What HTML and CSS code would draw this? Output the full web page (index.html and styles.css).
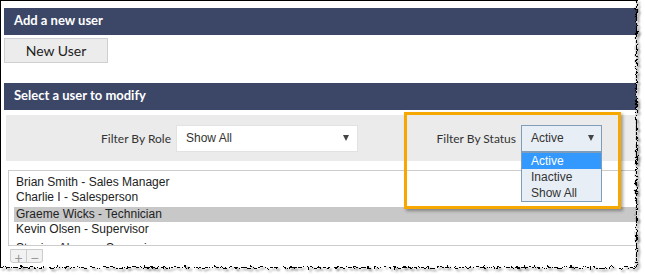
FILE: index.html
```html
<!DOCTYPE html>
<html lang="en">
<head>
  <meta charset="UTF-8" />
  <title>Users</title>
  <link rel="stylesheet" href="styles.css">
</head>
<body>
  <div class="frame">
    <div class="bar">Add a new user</div>
    <button class="btn">New User</button>

    <div class="bar bar-gap">Select a user to modify</div>
    <div class="filters">
      <div class="filter">
        <label>Filter By Role</label>
        <div class="select select-role"><span>Show All</span><i class="caret"></i></div>
      </div>
      <div class="filter">
        <label>Filter By Status</label>
        <div class="select select-status"><span>Active</span><i class="caret"></i>
          <ul class="options">
            <li class="on">Active</li>
            <li>Inactive</li>
            <li>Show All</li>
          </ul>
        </div>
      </div>
    </div>

    <div class="userlist">
      <div class="user">Brian Smith - Sales Manager</div>
      <div class="user">Charlie I - Salesperson</div>
      <div class="user sel">Graeme Wicks - Technician</div>
      <div class="user">Kevin Olsen - Supervisor</div>
      <div class="user last">Stanica Alvana - Supervisor</div>
    </div>
    <div class="listbtns"><span>+</span><span>&minus;</span></div>

    <!-- annotation round the status filter -->
    <div class="callout"></div>
  </div>

  <!-- torn paper edge -->
  <svg class="torn" width="645" height="275" viewBox="0 0 645 275">
    <defs>
      <filter id="rip" filterUnits="userSpaceOnUse" x="0" y="0" width="645" height="275" color-interpolation-filters="sRGB">
        <feTurbulence type="fractalNoise" baseFrequency="0.3" numOctaves="2" seed="7" result="noise"/>
        <feDisplacementMap in="SourceGraphic" in2="noise" scale="6" xChannelSelector="R" yChannelSelector="G"/>
      </filter>
      <filter id="rip-edge" filterUnits="userSpaceOnUse" x="0" y="0" width="645" height="275" color-interpolation-filters="sRGB">
        <feTurbulence type="fractalNoise" baseFrequency="0.3" numOctaves="2" seed="7" result="noise"/>
        <feDisplacementMap in="SourceGraphic" in2="noise" scale="6" xChannelSelector="R" yChannelSelector="G" result="moved"/>
        <feDropShadow in="moved" dx="2" dy="2" stdDeviation="1.2" flood-color="#000" flood-opacity="0.55"/>
      </filter>
    </defs>
    <path d="M636.5 -10 V267.5 H-10 V290 H660 V-10 Z" fill="#fff" filter="url(#rip)"/>
    <path d="M636.5 -10 V267.5 H-10" fill="none" stroke="#000" stroke-width="1.2" filter="url(#rip-edge)"/>
  </svg>
</body>
</html>
```

FILE: styles.css
```css
body {
  margin: 0;
  background: #fff;
  position: relative;
}

.frame {
  position: relative;
  box-sizing: border-box;
  width: 645px;
  height: 275px;
  padding: 7px 0 0 3px;
  border-top: 1px solid #000;
  border-left: 1px solid #000;
  overflow: hidden;
}

.bar {
  box-sizing: border-box;
  height: 27px;
  padding: 4px 0 0 10px;
  line-height: 23px;
  background: #3c4767;
  color: #fff;
  font: 700 13px 'Lato', sans-serif;
}
.bar-gap {
  margin-top: 20px;
}

.btn {
  display: block;
  margin-top: 3px;
  width: 104px;
  height: 25px;
  padding: 0;
  background: #ececec;
  border: 1px solid #cfcfcf;
  color: #222;
  font: 14px 'Lato', sans-serif;
}

.filters {
  margin: 5px 0 0 2px;
  height: 46px;
  background: #ebebeb;
  display: grid;
  grid-template-columns: 352px 244px;
  align-items: center;
}
.filter {
  display: flex;
  justify-content: flex-end;
  align-items: center;
  gap: 5px;
}
.filter label {
  font: 12px 'Lato', sans-serif;
  color: #333;
}

.select {
  position: relative;
  box-sizing: border-box;
  height: 27px;
  display: flex;
  align-items: center;
  justify-content: space-between;
  font: 12px 'Liberation Sans', Arial, sans-serif;
  color: #333;
}
.select-role {
  width: 182px;
  padding: 0 8px 0 9px;
  background: #fff;
  border: 1px solid #e2e2e2;
}
.select-status {
  width: 81px;
  padding: 0 7px 0 9px;
  background: #e8eef6;
  border: 1px solid #7f9db9;
}
.caret {
  width: 0;
  height: 0;
  border-left: 3px solid transparent;
  border-right: 3px solid transparent;
  border-top: 6px solid #444;
}

.options {
  position: absolute;
  top: 26px;
  left: -1px;
  width: 81px;
  box-sizing: border-box;
  margin: 0;
  padding: 0;
  list-style: none;
  background: #e8eef6;
  border: 1px solid #7f9db9;
  z-index: 2;
}
.options li {
  height: 16px;
  line-height: 16px;
  padding-left: 9px;
  color: #333;
}
.options li.on {
  background: #3399ff;
  color: #fff;
}

.userlist {
  box-sizing: border-box;
  margin: 9px 0 0 4px;
  height: 76px;
  padding: 4px 0 0 5px;
  border: 1px solid #ccc;
  border-right: none;
  overflow: hidden;
  font: 12px 'Liberation Sans', Arial, sans-serif;
  color: #222;
}
.user {
  height: 15px;
  line-height: 15px;
  padding-left: 2px;
  white-space: nowrap;
}
.user.sel {
  margin-top: 2px;
  background: #c8c8c8;
}
.user.last {
  margin-top: 4px;
}

.listbtns {
  display: flex;
  margin: 3px 0 0 6px;
}
.listbtns span {
  width: 15px;
  height: 12px;
  line-height: 12px;
  text-align: center;
  background: #f2f2f2;
  border: 1px solid #ccc;
  color: #999;
  font: 14px 'Liberation Sans', Arial, sans-serif;
}
.listbtns span:first-child {
  border-bottom-left-radius: 3px;
}
.listbtns span + span {
  margin-left: -1px;
  border-bottom-right-radius: 3px;
}

.callout {
  position: absolute;
  left: 403px;
  top: 111px;
  width: 217px;
  height: 97px;
  box-sizing: border-box;
  border: 3px solid #f6a800;
  box-shadow: 2px 2px 3px rgba(0, 0, 0, 0.35);
  z-index: 1;
}

.torn {
  position: absolute;
  top: 0;
  left: 0;
  z-index: 5;
}
```
